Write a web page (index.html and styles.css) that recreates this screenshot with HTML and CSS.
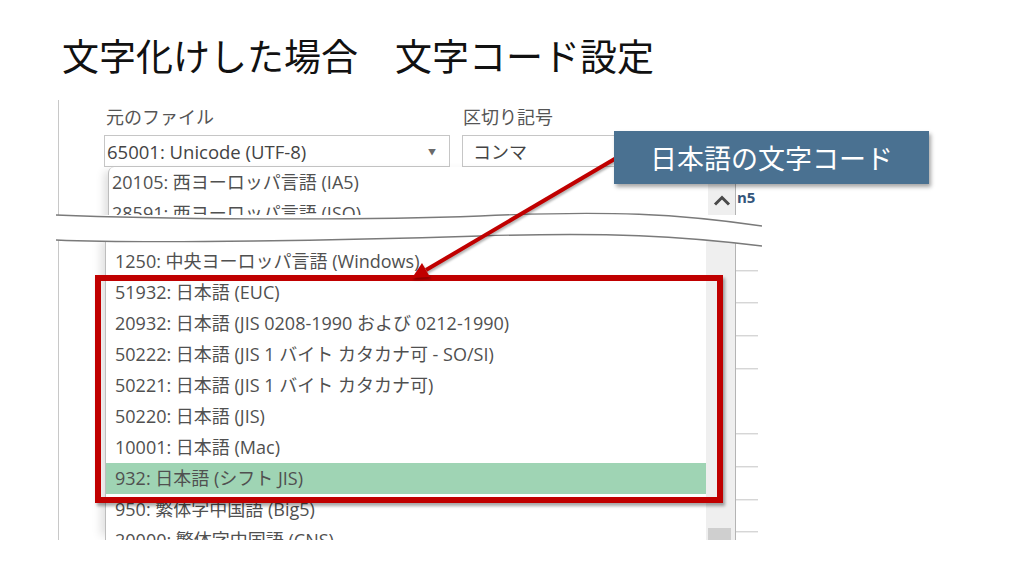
FILE: index.html
```html
<!DOCTYPE html>
<html lang="ja">
<head>
    <meta charset="UTF-8">
    <title>文字化けした場合　文字コード設定</title>
    <link rel="stylesheet" href="styles.css">
</head>
<body>

<div class="slide">
    <h1 class="title">文字化けした場合　文字コード設定</h1>

    <div class="shot">
        <!-- 上半分: 入力欄と一覧の先頭 -->
        <div class="shot-top">
            <div class="labels">
                <span class="label-file">元のファイル</span>
                <span>区切り記号</span>
            </div>
            <div class="fields">
                <div class="select">65001: Unicode (UTF-8)<span class="caret">▼</span></div>
                <div class="input">コンマ</div>
            </div>
            <div class="list-wrap">
                <div class="list list-top">
                    <div class="row">20105: 西ヨーロッパ言語 (IA5)</div>
                    <div class="row">28591: 西ヨーロッパ言語 (ISO)</div>
                </div>
                <div class="scroll scroll-top">
                    <svg width="18" height="11" viewBox="0 0 18 11">
                        <path d="M2 9.5 L9 2.5 L16 9.5" fill="none" stroke="#4a4a4a" stroke-width="3"/>
                    </svg>
                </div>
                <div class="grid-col"><span class="col-head">n5</span></div>
            </div>
        </div>

        <!-- 下半分: 日本語の候補 -->
        <div class="shot-bottom">
            <div class="list list-bottom">
                <div class="row">1250: 中央ヨーロッパ言語 (Windows)</div>
                <div class="row">51932: 日本語 (EUC)</div>
                <div class="row">20932: 日本語 (JIS 0208-1990 および 0212-1990)</div>
                <div class="row">50222: 日本語 (JIS 1 バイト カタカナ可 - SO/SI)</div>
                <div class="row">50221: 日本語 (JIS 1 バイト カタカナ可)</div>
                <div class="row">50220: 日本語 (JIS)</div>
                <div class="row">10001: 日本語 (Mac)</div>
                <div class="row selected">932: 日本語 (シフト JIS)</div>
                <div class="row">950: 繁体字中国語 (Big5)</div>
                <div class="row">20000: 繁体字中国語 (CNS)</div>
            </div>
            <div class="scroll scroll-bottom"><div class="thumb"></div></div>
            <div class="grid-col grid-lines"></div>
        </div>

        <svg class="tear" width="706" height="44" viewBox="56 208 706 44">
            <path d="M56,215 C150,219 350,221 480,216 C610,210 680,214 762,226 L762,246 C680,236 610,232 480,236 C350,240 150,244 56,240 Z" fill="#fff"/>
            <path d="M56,215 C150,219 350,221 480,216 C610,210 680,214 762,226" fill="none" stroke="#7a7a7a" stroke-width="1.3"/>
            <path d="M56,240 C150,244 350,240 480,236 C610,232 680,236 762,246" fill="none" stroke="#7a7a7a" stroke-width="1.3"/>
        </svg>
    </div>

    <div class="mark"></div>

    <svg class="arrow" width="1024" height="576" viewBox="0 0 1024 576">
        <line x1="618" y1="157" x2="426" y2="270" stroke="#c00000" stroke-width="4"/>
        <polygon points="412,278 430,277 422,263" fill="#c00000"/>
    </svg>

    <div class="callout">日本語の文字コード</div>
</div>

</body>
</html>
```

FILE: styles.css
```css
body {
    margin: 0;
    background: #fff;
    font-family: "Open Sans", "Noto Sans CJK JP", sans-serif;
}
.slide {
    position: relative;
    width: 1024px;
    height: 576px;
    overflow: hidden;
    padding-top: 35px;
    box-sizing: border-box;
}
.title {
    margin: 0 0 0 62px;
    font-family: "Noto Sans CJK JP", sans-serif;
    font-weight: 400;
    font-size: 37px;
    line-height: 40px;
    color: #111;
}
.shot {
    position: relative;
    width: 700px;
    margin: 25px 0 0 58px;
}
.shot-top {
    height: 115px;
    border-left: 1px solid #c8c8c8;
    padding: 6px 0 0 45px;
    box-sizing: border-box;
    overflow: hidden;
    display: flex;
    flex-direction: column;
}
.labels {
    display: flex;
    font-family: "Noto Sans CJK JP", sans-serif;
    font-size: 18px;
    line-height: 20px;
    color: #555;
}
.label-file {
    width: 357px;
    padding-left: 2px;
}
.fields {
    display: flex;
    gap: 12px;
    margin-top: 9px;
}
.select,
.input {
    height: 32px;
    border: 1px solid #c6c6c6;
    box-sizing: border-box;
    display: flex;
    align-items: center;
    font-size: 18px;
    color: #444;
    white-space: nowrap;
}
.select {
    width: 346px;
    padding-left: 2px;
    justify-content: space-between;
    font-size: 18.5px;
}
.caret {
    font-size: 8px;
    color: #6a6a6a;
    margin-right: 13px;
}
.input {
    width: 260px;
    padding-left: 10px;
}
.list-wrap {
    display: flex;
    flex: 1;
}
.list {
    flex: 1;
    border-left: 1px solid #bdbdbd;
    background: #fff;
    box-shadow: -8px 0 9px -4px rgba(0, 0, 0, 0.13);
    color: #505050;
    font-size: 18px;
}
.list-top {
    margin-left: 4px;
    border-top-left-radius: 6px;
}
.row {
    height: 31px;
    line-height: 31px;
    padding-left: 3px;
    white-space: nowrap;
}
.list-bottom .row {
    padding-left: 9px;
}
.row.selected {
    background: #9fd4b4;
}
.scroll {
    width: 27px;
    background: #efefef;
}
.scroll-top {
    display: flex;
    justify-content: center;
    padding-top: 28px;
    box-sizing: border-box;
}
.grid-col {
    width: 22px;
    border-left: 1px solid #b4b4b4;
}
.col-head {
    display: block;
    padding: 20px 0 0 1px;
    font-size: 15px;
    font-weight: 700;
    color: #33557a;
}
.shot-bottom {
    height: 304px;
    margin-top: 21px;
    border-left: 1px solid #c8c8c8;
    padding-left: 46px;
    box-sizing: border-box;
    overflow: hidden;
    display: flex;
}
.list-bottom {
    padding-top: 10px;
}
.scroll-bottom {
    display: flex;
    flex-direction: column;
    justify-content: flex-end;
    padding-left: 2px;
}
.thumb {
    height: 12px;
    width: 23px;
    background: #cfcfcf;
}
.grid-lines {
    background: repeating-linear-gradient(to bottom, transparent 0, transparent 31.7px, #c4c4c4 31.7px, #c4c4c4 32.7px);
    background-position: 0 2.3px;
}
.tear {
    position: absolute;
    left: -2px;
    top: 108px;
}
.mark {
    position: absolute;
    left: 95px;
    top: 275px;
    width: 628px;
    height: 228px;
    border: 6px solid #c00000;
    box-sizing: border-box;
    box-shadow: 2px 3px 3px rgba(0, 0, 0, 0.35);
}
.arrow {
    position: absolute;
    left: 0;
    top: 0;
    pointer-events: none;
    filter: drop-shadow(1px 2px 1px rgba(0, 0, 0, 0.3));
}
.callout {
    position: absolute;
    left: 614px;
    top: 131px;
    width: 315px;
    height: 53px;
    background: #4a7191;
    box-shadow: 2px 3px 4px rgba(0, 0, 0, 0.35);
    display: flex;
    align-items: center;
    justify-content: center;
    font-family: "Noto Sans CJK JP", sans-serif;
    font-size: 27px;
    color: #fff;
}
```
